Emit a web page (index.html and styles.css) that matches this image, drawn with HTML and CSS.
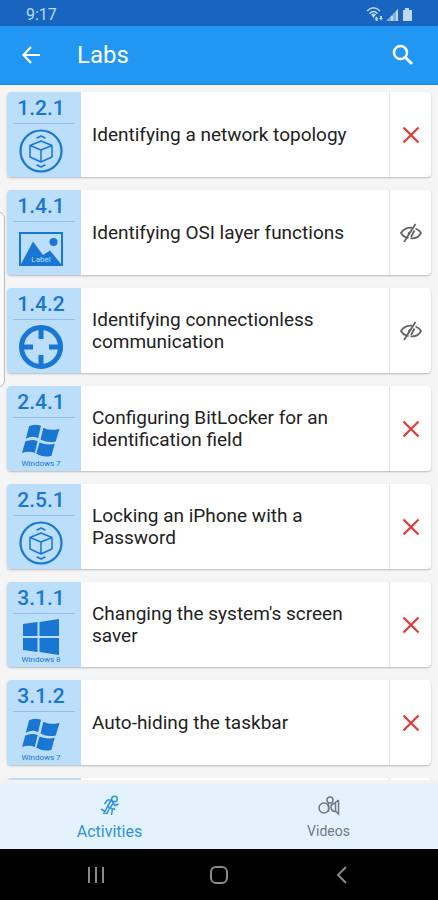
FILE: index.html
```html
<!DOCTYPE html>
<html lang="en">
<head>
<meta charset="utf-8">
<meta name="viewport" content="width=device-width, initial-scale=1">
<title>Labs</title>
<link rel="stylesheet" href="styles.css">
</head>
<body>
<svg class="sprite" aria-hidden="true">
  <symbol id="cube" viewBox="0 0 44 44">
    <g fill="none" stroke="currentColor" stroke-linejoin="round" stroke-linecap="round">
      <circle cx="22" cy="22" r="20.5" stroke-width="2.2"/>
      <path stroke-width="1.5" d="M22 12L33 16.500V28L22 33L11 28V16.500ZM11 16.500L22 21L33 16.500M22 21V33"/>
      <path stroke-width="1.5" d="M18 9L22 7L26 9M18 36L22 38L26 36"/>
    </g>
  </symbol>
  <symbol id="picture" viewBox="0 0 44 34">
    <rect x="1" y="1" width="42" height="32" fill="none" stroke="currentColor" stroke-width="2"/>
    <path fill="currentColor" d="M2 32L14 9.500L24 23L31 18.500L42 32Z"/>
    <circle cx="34.500" cy="10" r="4" fill="currentColor"/>
  </symbol>
  <symbol id="target" viewBox="0 0 44 44">
    <g fill="none" stroke="currentColor" stroke-width="5">
      <circle cx="22" cy="22" r="19.500"/>
      <path d="M22 3V14M22 30V41M3 22H14M30 22H41"/>
    </g>
  </symbol>
  <symbol id="win7" viewBox="0 0 40 36">
    <g fill="currentColor">
      <path d="M7.500 2.500Q13-.5 20 2L17 15Q11 12 4 15.500Z"/>
      <path d="M22.500 4Q30 8 39.500 5L35.500 18.500Q27 20.500 19.500 16.500Z"/>
      <path d="M3.500 18.500Q10 15.500 16.500 18L13.500 30.500Q7 28 0 30.500Z"/>
      <path d="M18.500 19.500Q26 23 34.500 21L31 33.500Q23 36 15 31.500Z"/>
    </g>
  </symbol>
  <symbol id="win8" viewBox="0 0 36 36">
    <path fill="currentColor" d="M0 5L14.500 3V17H0ZM16.500 3L36 0V17H16.500ZM0 19H14.500V33L0 31ZM16.500 19H36V36L16.500 33Z"/>
  </symbol>
  <symbol id="cross" viewBox="0 0 18 18">
    <path d="M1.500 1.500L16.500 16.500M16.500 1.500L1.500 16.500" fill="none" stroke="currentColor" stroke-width="2.2"/>
  </symbol>
  <symbol id="hidden" viewBox="0 0 22 20">
    <g fill="none" stroke="currentColor" stroke-width="1.8">
      <path d="M8.500 15C5 14.500 2.500 12.500 1 10C3 6 8 4 13 4.800M15.500 5.500C18 6.500 20 8 21 10C18.500 14.500 14 15.800 10.500 15.200"/>
      <path d="M15.500 1L4 19M11 14L14.500 7.500"/>
    </g>
    <path fill="currentColor" d="M12 8L8 13Q6.500 8 12 8Z"/>
  </symbol>
</svg>

<div class="status">
  <span>9:17</span>
  <svg width="46" height="16" viewBox="0 0 46 16" aria-hidden="true">
    <g fill="none" stroke="currentColor" stroke-width="1.500">
      <path d="M1 5Q7.500-1.500 14 5M3.500 7.500Q7.500 3.500 11.500 7.500"/>
    </g>
    <path fill="currentColor" d="M5 8.500Q7.500 6.500 10 8.500L7.500 12ZM10.500 10.500L12.500 13H11.500V15H9.500V13H8.500ZM15 14.500L13 12H14V10H16V12H17Z"/>
    <path fill="currentColor" opacity=".65" d="M20 15L32 3V15Z"/>
    <path fill="currentColor" d="M25 10H27V15H25ZM30 5L32 3V15H30Z"/>
    <path fill="currentColor" d="M37 4H39V2H43V4H46V15H37Z"/>
  </svg>
</div>

<header class="appbar">
  <button type="button" aria-label="Back">
    <svg width="18" height="18" viewBox="0 0 18 18"><path d="M9 1L1.500 9L9 17M1.500 9H18" fill="none" stroke="currentColor" stroke-width="2.200"/></svg>
  </button>
  <h1>Labs</h1>
  <button type="button" aria-label="Search">
    <svg width="22" height="22" viewBox="0 0 22 22"><g fill="none" stroke="currentColor"><circle cx="8.500" cy="8.500" r="6.500" stroke-width="2.500"/><path stroke-width="3" d="M13 13L20 20"/></g></svg>
  </button>
</header>

<main class="labs">
  <ul class="list">
    <li class="card">
      <div class="badge"><span class="number">1.2.1</span><svg class="icon"><use href="#cube"/></svg></div>
      <a class="title" href="#lab-1-2-1">Identifying a network topology</a>
      <div class="state failed"><svg role="img" aria-label="Not passed"><use href="#cross"/></svg></div>
    </li>
    <li class="card">
      <div class="badge"><span class="number">1.4.1</span><div class="picture"><svg class="icon"><use href="#picture"/></svg><span class="picture-label">Label</span></div></div>
      <a class="title" href="#lab-1-4-1">Identifying OSI layer functions</a>
      <div class="state"><svg role="img" aria-label="Not viewed"><use href="#hidden"/></svg></div>
    </li>
    <li class="card">
      <div class="badge"><span class="number">1.4.2</span><svg class="icon"><use href="#target"/></svg></div>
      <a class="title" href="#lab-1-4-2">Identifying connectionless communication</a>
      <div class="state"><svg role="img" aria-label="Not viewed"><use href="#hidden"/></svg></div>
    </li>
    <li class="card">
      <div class="badge"><span class="number">2.4.1</span><svg class="icon os"><use href="#win7"/></svg><small>Windows 7</small></div>
      <a class="title" href="#lab-2-4-1">Configuring BitLocker for an identification field</a>
      <div class="state failed"><svg role="img" aria-label="Not passed"><use href="#cross"/></svg></div>
    </li>
    <li class="card">
      <div class="badge"><span class="number">2.5.1</span><svg class="icon"><use href="#cube"/></svg></div>
      <a class="title" href="#lab-2-5-1">Locking an iPhone with a Password</a>
      <div class="state failed"><svg role="img" aria-label="Not passed"><use href="#cross"/></svg></div>
    </li>
    <li class="card">
      <div class="badge"><span class="number">3.1.1</span><svg class="icon os"><use href="#win8"/></svg><small>Windows 8</small></div>
      <a class="title" href="#lab-3-1-1">Changing the system's screen saver</a>
      <div class="state failed"><svg role="img" aria-label="Not passed"><use href="#cross"/></svg></div>
    </li>
    <li class="card">
      <div class="badge"><span class="number">3.1.2</span><svg class="icon os"><use href="#win7"/></svg><small>Windows 7</small></div>
      <a class="title" href="#lab-3-1-2">Auto-hiding the taskbar</a>
      <div class="state failed"><svg role="img" aria-label="Not passed"><use href="#cross"/></svg></div>
    </li>
    <li class="card">
      <div class="badge"></div>
      <div class="title"></div>
      <div class="state"></div>
    </li>
  </ul>
</main>
<div class="edge-handle"></div>

<nav class="tabs">
  <a class="active" href="#activities">
    <svg width="20" height="22" viewBox="0 0 20 22" aria-hidden="true">
      <g fill="none" stroke="currentColor" stroke-width="1.500" stroke-linejoin="round">
        <circle cx="14.500" cy="4" r="2.800"/>
        <path d="M4.500 9L7.500 5H11L13 7.500L15 10.500L18.500 9M11 5.500L7.500 11.500L12.500 14L11.500 20M13.500 8L10.500 12M7.500 11.500L5 16.500L1 14M9.500 13L7 18.500L3 18M13.500 13L15 15"/>
      </g>
    </svg>
    <span>Activities</span>
  </a>
  <a href="#videos">
    <svg width="22" height="22" viewBox="0 0 22 22" aria-hidden="true">
      <g fill="none" stroke="currentColor" stroke-width="1.500">
        <circle cx="6" cy="13" r="5"/><circle cx="12" cy="5" r="3"/>
        <path d="M10.500 8V17M20.500 5V19L18 16.500H16Q13 15.500 13 12Q13 9 16 8.500L20.500 5M17.500 8V16"/>
      </g>
    </svg>
    <span>Videos</span>
  </a>
</nav>

<div class="system">
  <button type="button" aria-label="Recent apps"><svg width="18" height="18" viewBox="0 0 18 18"><path d="M2 1V17M9 1V17M16 1V17" fill="none" stroke="currentColor" stroke-width="2"/></svg></button>
  <button type="button" aria-label="Home"><svg width="20" height="18" viewBox="0 0 20 18"><rect x="2" y="1" width="16" height="16" rx="5" fill="none" stroke="currentColor" stroke-width="2"/></svg></button>
  <button type="button" aria-label="Back"><svg width="18" height="18" viewBox="0 0 18 18"><path d="M13 1L5 9L13 17" fill="none" stroke="currentColor" stroke-width="2"/></svg></button>
</div>
</body>
</html>
```
FILE: styles.css
```css
* { box-sizing: border-box; }

body {
  margin: 0;
  height: 100vh;
  display: flex;
  flex-direction: column;
  position: relative;
  overflow: hidden;
  background: #f5f5f5;
  color: #222;
  font-family: Roboto, "Liberation Sans", sans-serif;
}

svg { display: block; }
.sprite { position: absolute; width: 0; height: 0; }
a { color: inherit; text-decoration: none; }

button {
  display: grid;
  place-items: center;
  padding: 0;
  border: 0;
  background: none;
  color: inherit;
}

.status {
  flex: none;
  height: 26px;
  padding: 2px 26px 0;
  display: flex;
  align-items: center;
  justify-content: space-between;
  background: #1865c0;
  color: #bcd9f5;
  font-size: 16px;
}

.appbar {
  flex: none;
  height: 59px;
  padding: 0 13px 0 12px;
  display: flex;
  align-items: center;
  background: #2196f3;
  border-bottom: 1px solid #1b87df;
  color: #fff;
}
.appbar button { width: 38px; height: 44px; }
.appbar h1 {
  flex: 1;
  margin: 0 0 0 27px;
  font-size: 24px;
  font-weight: 400;
}
.appbar button:last-child { width: 44px; }

.labs {
  flex: 1;
  min-height: 0;
  overflow: hidden;
}
.list {
  margin: 0;
  padding: 7px;
  display: grid;
  gap: 13px;
  list-style: none;
}
.card {
  height: 85px;
  display: flex;
  border-radius: 4px;
  background: #fff;
  box-shadow: 0 1px 2px rgba(0, 0, 0, 0.25);
}

.badge {
  width: 74px;
  padding: 2px 6px 0;
  display: flex;
  flex-direction: column;
  align-items: center;
  border-radius: 4px 0 0 4px;
  background: #bbdefb;
  color: #1976d2;
}
.number {
  align-self: stretch;
  height: 30px;
  border-bottom: 1px solid #90c0ea;
  line-height: 28px;
  font-size: 21px;
  font-weight: 500;
  text-align: center;
  padding-right: 6px;
}
.icon {
  width: 44px;
  height: 44px;
  margin: 5px 6px 0 0;
}
.icon.os { width: 38px; height: 36px; }
.badge small {
  line-height: 10px;
  margin-right: 6px;
  font-size: 8px;
}
.picture { position: relative; }
.picture-label {
  position: absolute;
  left: 0;
  right: 6px;
  bottom: 6px;
  color: #bbdefb;
  font-size: 8px;
  line-height: 10px;
  text-align: center;
}

.title {
  flex: 1;
  align-self: center;
  padding: 0 11px;
  font-size: 19px;
  line-height: 22px;
}
.state {
  width: 42px;
  display: grid;
  place-items: center;
  border-left: 1px solid #e4e4e4;
  color: #666;
}
.state svg { width: 22px; height: 20px; }
.state.failed { color: #e53935; }
.state.failed svg { width: 18px; height: 18px; }

.edge-handle {
  position: absolute;
  left: -8px;
  top: 212px;
  width: 13px;
  height: 175px;
  border: 1px solid #bbb;
  border-radius: 6px;
  background: #fafafa;
}

.tabs {
  flex: none;
  height: 69px;
  display: flex;
  border-top: 4px solid #f1f2f4;
  background: #e3f2fd;
  color: #6d7a84;
}
.tabs a {
  flex: 1;
  display: flex;
  flex-direction: column;
  align-items: center;
  padding-top: 11px;
  font-size: 14px;
  line-height: 29px;
}
.tabs .active {
  color: #2c94dc;
  font-size: 16px;
}

.system {
  flex: none;
  height: 51px;
  padding: 0 35px;
  display: flex;
  background: #000;
  color: #8a8a8a;
}
.system button { flex: 1; }
```
